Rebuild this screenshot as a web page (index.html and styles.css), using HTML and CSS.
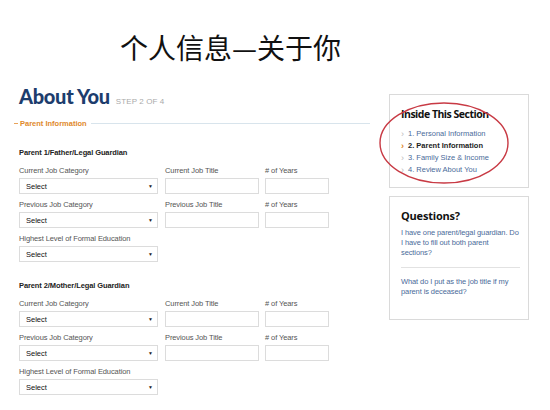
FILE: index.html
```html
<!DOCTYPE html>
<html>
<head>
<meta charset="utf-8">
<link rel="stylesheet" href="styles.css">
</head>
<body>
<div class="page">
  <h1 class="slide-title">个人信息—关于你</h1>
  <div class="main">
    <div class="form-col">
      <div class="page-head">
        <span class="about">About You</span>
        <span class="step">STEP 2 OF 4</span>
      </div>
      <div class="legend"><span class="legend-dash"></span><span class="legend-text">Parent Information</span><span class="legend-line"></span></div>

      <div class="parent">
        <div class="parent-title">Parent 1/Father/Legal Guardian</div>
        <div class="row">
          <div class="field f-select"><div class="label">Current Job Category</div><div class="box select"><span>Select</span><span class="caret">&#9660;</span></div></div>
          <div class="field f-title"><div class="label">Current Job Title</div><div class="box"></div></div>
          <div class="field f-years"><div class="label"># of Years</div><div class="box"></div></div>
        </div>
        <div class="row">
          <div class="field f-select"><div class="label">Previous Job Category</div><div class="box select"><span>Select</span><span class="caret">&#9660;</span></div></div>
          <div class="field f-title"><div class="label">Previous Job Title</div><div class="box"></div></div>
          <div class="field f-years"><div class="label"># of Years</div><div class="box"></div></div>
        </div>
        <div class="row">
          <div class="field f-select"><div class="label">Highest Level of Formal Education</div><div class="box select"><span>Select</span><span class="caret">&#9660;</span></div></div>
        </div>
      </div>

      <div class="parent second">
        <div class="parent-title">Parent 2/Mother/Legal Guardian</div>
        <div class="row">
          <div class="field f-select"><div class="label">Current Job Category</div><div class="box select"><span>Select</span><span class="caret">&#9660;</span></div></div>
          <div class="field f-title"><div class="label">Current Job Title</div><div class="box"></div></div>
          <div class="field f-years"><div class="label"># of Years</div><div class="box"></div></div>
        </div>
        <div class="row">
          <div class="field f-select"><div class="label">Previous Job Category</div><div class="box select"><span>Select</span><span class="caret">&#9660;</span></div></div>
          <div class="field f-title"><div class="label">Previous Job Title</div><div class="box"></div></div>
          <div class="field f-years"><div class="label"># of Years</div><div class="box"></div></div>
        </div>
        <div class="row">
          <div class="field f-select"><div class="label">Highest Level of Formal Education</div><div class="box select"><span>Select</span><span class="caret">&#9660;</span></div></div>
        </div>
      </div>
    </div>

    <div class="side-col">
      <div class="card section-card">
        <div class="card-title">Inside This Section</div>
        <ul class="steps">
          <li><span class="chev">&rsaquo;</span>1. Personal Information</li>
          <li class="current"><span class="chev">&rsaquo;</span>2. Parent Information</li>
          <li><span class="chev">&rsaquo;</span>3. Family Size &amp; Income</li>
          <li><span class="chev">&rsaquo;</span>4. Review About You</li>
        </ul>
        <svg class="circle" viewBox="0 0 132 84" width="132" height="84"><ellipse cx="66" cy="42" rx="64" ry="40" fill="none" stroke="#c83a44" stroke-width="1.4"/></svg>
      </div>
      <div class="card q-card">
        <div class="card-title q">Questions?</div>
        <div class="question">I have one parent/legal guardian. Do I have to fill out both parent sections?</div>
        <div class="q-sep"></div>
        <div class="question">What do I put as the job title if my parent is deceased?</div>
      </div>
    </div>
  </div>
</div>
</body>
</html>
```

FILE: styles.css
```css
* { box-sizing: border-box; }
html, body { margin: 0; padding: 0; background: #fff; }
body { font-family: "Liberation Sans", Arial, sans-serif; color: #333; }
.page { width: 550px; height: 410px; overflow: hidden; position: relative; }

.slide-title {
  margin: 0;
  padding: 27px 0 0 120px;
  height: 80px;
  font-family: "Noto Sans CJK SC", "Noto Sans", sans-serif;
  font-weight: 400;
  font-size: 28px;
  line-height: 40px;
  color: #111;
}

.main { display: flex; padding-left: 14px; }
.form-col { width: 356px; }
.side-col { margin-left: 19px; width: 140px; display: flex; flex-direction: column; gap: 8px; padding-top: 14px; }

.page-head { padding-left: 5px; height: 36px; display: flex; align-items: baseline; padding-top: 4px; }
.about { font-family: Lato, "Open Sans", sans-serif; font-weight: 900; font-size: 20px; color: #1d3d6d; letter-spacing: -0.3px; line-height: 24px; }
.step { font-size: 8px; color: #aaa; margin-left: 6px; letter-spacing: 0.1px; }

.legend { display: flex; align-items: center; height: 14px; }
.legend-dash { width: 4px; height: 1px; background: #e8a35a; }
.legend-text { font-size: 7.5px; font-weight: bold; color: #e0892c; padding: 0 4px 0 2px; }
.legend-line { flex: 1; height: 1px; background: #d8e4ec; }

.parent { padding-left: 5px; padding-top: 18px; }
.parent.second { padding-top: 13px; }
.parent-title { font-size: 7.5px; font-weight: bold; color: #222; line-height: 10px; margin-bottom: 8px; letter-spacing: -0.1px; }

.row { display: flex; gap: 7px; margin-bottom: 6px; }
.field { display: flex; flex-direction: column; }
.f-select { width: 139px; }
.f-title { width: 94px; }
.f-years { width: 64px; margin-left: -1px; }
.label { font-size: 7.5px; color: #555; line-height: 10px; margin-bottom: 2px; white-space: nowrap; letter-spacing: -0.1px; }
.box { height: 16px; border: 1px solid #dcdcdc; background: #fff; }
.select { display: flex; align-items: center; justify-content: space-between; padding: 0 4px 0 6px; font-size: 7.5px; color: #111; }
.caret { font-size: 5px; color: #222; }

.card { border: 1px solid #dadada; background: #fff; position: relative; padding: 0 8px 0 11px; }
.section-card { height: 94px; padding-top: 12px; }
.card-title { font-family: "Open Sans", Lato, sans-serif; font-weight: 700; font-size: 10.5px; color: #111; line-height: 14px; letter-spacing: -0.5px; }
.steps { list-style: none; margin: 7px 0 0; padding: 0; }
.steps li { font-size: 7.5px; line-height: 12px; height: 12px; color: #4a6b9a; white-space: nowrap; display: flex; align-items: center; }
.steps li.current { color: #222; font-weight: bold; }
.chev { display: inline-block; width: 7px; color: #bbb; font-size: 9px; line-height: 12px; font-weight: normal; }
.steps li.current .chev { color: #e0892c; font-weight: bold; }

.circle { position: absolute; left: -12px; top: 6px; }

.q-card { height: 124px; padding-top: 12px; }
.card-title.q { font-size: 11px; margin-bottom: 5px; letter-spacing: -0.2px; }
.question { font-size: 7.5px; line-height: 10px; color: #4a6b9a; letter-spacing: -0.1px; }
.q-sep { height: 1px; background: #e2e2e2; margin: 9px 0 9px; }
```
